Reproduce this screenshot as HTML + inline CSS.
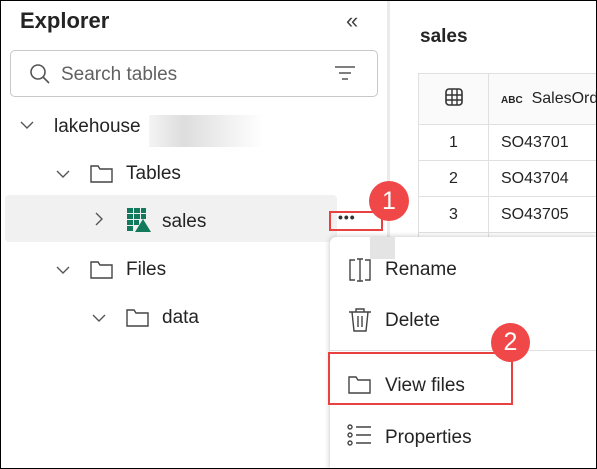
<!DOCTYPE html><html><head><style>
html,body{margin:0;width:597px;height:469px;overflow:hidden}
body{font-family:"Liberation Sans",sans-serif;background:#fff;color:#242424}
#w{position:relative;width:597px;height:469px;overflow:hidden}
.a{position:absolute}
.frame{position:absolute;left:0;top:0;width:595px;height:467px;border:1px solid #000;z-index:50;pointer-events:none}
.t{font-size:19px;color:#242424}
table{table-layout:fixed}
td{border:1px solid #e0e0e0;font-size:16px;padding:0;height:35px;white-space:nowrap;overflow:hidden}
</style></head><body><div id="w">
<div class="frame"></div>
<div class="a" style="left:387px;top:0;width:3px;height:469px;background:#ebebeb"></div>
<div class="a" style="left:20px;top:8px;font-size:22px;font-weight:bold;color:#242424">Explorer</div>
<div class="a" style="left:346px;top:8px;font-size:22px;color:#444">«</div>
<div class="a" style="left:10px;top:50px;width:366px;height:45px;border:1px solid #c8c8c8;border-radius:5px"></div>
<svg class="a" style="left:28px;top:62px" width="24" height="24"><circle cx="10" cy="10" r="7" fill="none" stroke="#555" stroke-width="1.6"/><line x1="15" y1="15" x2="21" y2="21" stroke="#555" stroke-width="1.6"/></svg>
<div class="a t" style="left:61px;top:64px;color:#616161">Search tables</div>
<svg class="a" style="left:333px;top:64px" width="24" height="18"><path d="M2 3h20M6 9h12M9 15h6" stroke="#555" stroke-width="1.5"/></svg>
<svg class="a" style="left:20px;top:120px" width="14" height="10"><path d="M1 2l6 6 6-6" fill="none" stroke="#555" stroke-width="1.4"/></svg>
<div class="a t" style="left:54px;top:116px">lakehouse</div>
<div class="a" style="left:149px;top:115px;width:115px;height:32px;background:linear-gradient(90deg,#f4f4f4,#ddd 30%,#f6f6f6 80%,#fff)"></div>
<svg class="a" style="left:56px;top:169px" width="14" height="10"><path d="M1 2l6 6 6-6" fill="none" stroke="#555" stroke-width="1.4"/></svg>
<svg class="a" style="left:89px;top:162px" width="26" height="22"><path d="M2 4h7l2 3h12v13H2z" fill="none" stroke="#444" stroke-width="1.4"/></svg>
<div class="a t" style="left:126px;top:163px">Tables</div>
<div class="a" style="left:5px;top:195px;width:332px;height:47px;background:#f1f1f1;border-radius:4px"></div>
<svg class="a" style="left:94px;top:212px" width="10" height="14"><path d="M2 1l6 6-6 6" fill="none" stroke="#555" stroke-width="1.4"/></svg>
<svg class="a" style="left:126px;top:207px" width="26" height="26"><g fill="#127a5c"><rect x="1" y="1" width="6" height="5"/><rect x="8" y="1" width="6" height="5"/><rect x="15" y="1" width="5" height="5"/><rect x="1" y="7" width="6" height="5"/><rect x="8" y="7" width="6" height="5"/><rect x="15" y="7" width="5" height="5"/><rect x="1" y="13" width="6" height="5"/><rect x="8" y="13" width="5" height="5"/><rect x="1" y="19" width="6" height="5"/><path d="M17 12l8 13h-16z"/></g></svg>
<div class="a t" style="left:162px;top:211px">sales</div>
<div class="a" style="left:329px;top:211px;width:50px;height:16px;border:2px solid #e8413f"></div>
<div class="a" style="left:338px;top:209px;font-size:14px;font-weight:bold;letter-spacing:1px;color:#333">•••</div>
<div class="a" style="left:369px;top:181px;width:40px;height:40px;border-radius:50%;background:#f04848;color:#fff;font-size:25px;text-align:center;line-height:40px;z-index:5">1</div>
<svg class="a" style="left:56px;top:265px" width="14" height="10"><path d="M1 2l6 6 6-6" fill="none" stroke="#555" stroke-width="1.4"/></svg>
<svg class="a" style="left:89px;top:258px" width="26" height="22"><path d="M2 4h7l2 3h12v13H2z" fill="none" stroke="#444" stroke-width="1.4"/></svg>
<div class="a t" style="left:126px;top:259px">Files</div>
<svg class="a" style="left:92px;top:313px" width="14" height="10"><path d="M1 2l6 6 6-6" fill="none" stroke="#555" stroke-width="1.4"/></svg>
<svg class="a" style="left:125px;top:306px" width="26" height="22"><path d="M2 4h7l2 3h12v13H2z" fill="none" stroke="#444" stroke-width="1.4"/></svg>
<div class="a t" style="left:162px;top:307px">data</div>
<div class="a" style="left:420px;top:26px;font-size:19px;font-weight:bold">sales</div>
<div class="a" style="left:418px;top:73px;width:179px;height:170px;overflow:hidden">
<table style="border-collapse:collapse;width:260px">
<colgroup><col style="width:70px"><col style="width:190px"></colgroup>
<tr><td style="height:50px;text-align:center;background:#fafafa"><svg width="20" height="20"><rect x="2" y="2" width="16" height="16" rx="3" fill="none" stroke="#333" stroke-width="1.6"/><path d="M2 8h16M2 13h16M8 2v16M13 2v16" stroke="#333" stroke-width="1.4"/></svg></td><td style="background:#fafafa;padding-left:12px"><span style="font-size:10px;font-weight:bold">ABC</span>&nbsp;&nbsp;SalesOrderNumber</td></tr>
<tr><td style="text-align:center">1</td><td style="padding-left:12px">SO43701</td></tr>
<tr><td style="text-align:center">2</td><td style="padding-left:12px">SO43704</td></tr>
<tr><td style="text-align:center">3</td><td style="padding-left:12px">SO43705</td></tr>
<tr><td></td><td></td></tr>
</table></div>
<div class="a" style="left:330px;top:237px;width:267px;height:232px;background:#fff;border-radius:6px 0 0 0;box-shadow:0 0 6px rgba(0,0,0,.25);z-index:3">
<div class="a" style="left:40px;top:0;width:25px;height:22px;background:#e4e4e4"></div>
<svg class="a" style="left:17px;top:20px" width="26" height="26"><path d="M8 3H3v20h5M18 3h5v20h-5M13 2v22M10 2h6M10 24h6" fill="none" stroke="#444" stroke-width="1.4"/></svg>
<div class="a t" style="left:55px;top:22px">Rename</div>
<svg class="a" style="left:17px;top:70px" width="26" height="26"><path d="M2 5h22M9 5V2h8v3M5 5l2 19h12l2-19M11 9v11M15 9v11" fill="none" stroke="#444" stroke-width="1.4"/></svg>
<div class="a t" style="left:55px;top:73px">Delete</div>
<div class="a" style="left:0;top:113px;width:267px;height:1px;background:#e0e0e0"></div>
<svg class="a" style="left:17px;top:136px" width="26" height="22"><path d="M2 4h7l2 3h12v13H2z" fill="none" stroke="#444" stroke-width="1.4"/></svg>
<div class="a t" style="left:55px;top:138px">View files</div>
<svg class="a" style="left:17px;top:186px" width="26" height="26"><g fill="none" stroke="#444" stroke-width="1.4"><circle cx="3" cy="4" r="2"/><circle cx="3" cy="12" r="2"/><circle cx="3" cy="20" r="2"/><path d="M9 4h15M9 12h15M9 20h15"/></g></svg>
<div class="a t" style="left:55px;top:190px">Properties</div>
</div>
<div class="a" style="left:328px;top:352px;width:181px;height:49px;border:2px solid #e8413f;z-index:4"></div>
<div class="a" style="left:491px;top:323px;width:39px;height:39px;border-radius:50%;background:#f04848;color:#fff;font-size:25px;text-align:center;line-height:39px;z-index:5">2</div>
</div></body></html>
